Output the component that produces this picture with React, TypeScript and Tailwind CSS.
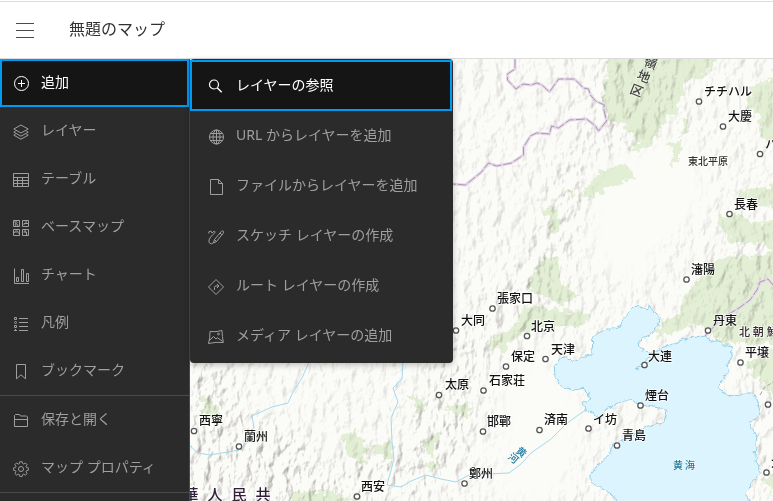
import type { ReactNode } from 'react';

type Item = { label: string; icon: ReactNode };

function Icon({ children }: { children: ReactNode }) {
  return (
    <svg
      className="mt-0.5 size-4 shrink-0"
      viewBox="0 0 16 16"
      fill="none"
      stroke="currentColor"
      strokeWidth="1"
      aria-hidden="true"
    >
      {children}
    </svg>
  );
}

const addIcon = (
  <Icon>
    <circle cx="8.5" cy="7.5" r="7" />
    <path d="M5 7.5h7M8.5 4v7" />
  </Icon>
);

const layersIcon = (
  <Icon>
    <path d="M8 1 15.2 5 8 9 .8 5zM2.6 7.2.8 8.2l7.2 4 7.2-4-1.8-1M2.6 10.2l-1.8 1 7.2 4 7.2-4-1.8-1" />
  </Icon>
);

const tableIcon = (
  <Icon>
    <path d="M.5 1.5h15v13H.5zM.5 5.5h15M.5 8.5h15M.5 11.5h15M4.5 5v9.5M9.5 5v9.5" />
  </Icon>
);

const basemapIcon = (
  <Icon>
    <path d="M.5.5h6v6h-6zM9.5.5h6v6h-6zM.5 9.5h6v6h-6zM9.5 9.5h6v6h-6z" />
    <path d="M2 1v2l2 1 1 2M3 1.5l1.5 1M2 4l1 2M13 1v2.5h-2V5M13 3.5h2M1 13l1.5-2h2l1 2.5M3 12v1M12 10v2h1.5v3M10.5 12H13" />
  </Icon>
);

const chartIcon = (
  <Icon>
    <path d="M1.5.5v15H16M3.5 9.5h2v4h-2zM8.5 1.5h2v12h-2zM13.5 5.5h2v8h-2z" />
  </Icon>
);

const legendIcon = (
  <Icon>
    <path d="M6 2.5h9M6 6.5h9M6 10.5h9M6 14.5h9M1.5 1.5h2v2h-2z" />
    <circle cx="2.5" cy="6.5" r="1" />
    <path d="M1.5 9.5h2v2h-2zM1 14.5h3M2.5 13v2" />
  </Icon>
);

const bookmarkIcon = (
  <Icon>
    <path d="M3.5.5h9v14.3L8 10.8l-4.5 4z" />
  </Icon>
);

const folderIcon = (
  <Icon>
    <path d="M1.5 13.5v-11l1-1h4l1 1.5h6l1 1v9.500zM1.5 6.5h13" />
  </Icon>
);

const gearIcon = (
  <Icon>
    <path
      d="M6.800.7h2.400l.5 2 1.200.5 1.800-1.100 1.700 1.700-1.100 1.800.5 1.200 2 .5v2.400l-2 .5-.5 1.200 1.100 1.800-1.700 1.700-1.800-1.100-1.200.5-.5 2H6.800l-.5-2-1.200-.5-1.800 1.100-1.700-1.700 1.100-1.800-.5-1.200-2-.5V7.300l2-.5.5-1.200-1.100-1.800 1.700-1.700 1.800 1.100 1.200-.5z"
      transform="translate(.4 0) scale(.95)"
    />
    <circle cx="8" cy="8" r="2.5" />
  </Icon>
);

const searchIcon = (
  <Icon>
    <circle cx="6" cy="5.5" r="4.500" strokeWidth="1.200" />
    <path d="m9.200 8.700 4.500 4.500" strokeWidth="1.400" />
  </Icon>
);

const globeIcon = (
  <Icon>
    <circle cx="8.5" cy="8" r="7" />
    <ellipse cx="8.5" cy="8" rx="3.5" ry="7" />
    <path d="M8.5 1v14M1.5 8h14M2.5 4.5h12M2.5 11.5h12" />
  </Icon>
);

const fileIcon = (
  <Icon>
    <path d="M2.5.5h8l4 4v11h-12zM10.5.5v4h4" />
  </Icon>
);

const sketchIcon = (
  <Icon>
    <path d="M5.5 14 6.5 10.5 13.5 2.200q1-.9 1.800 0t0 1.900L8.500 12.500zM12 4l2 1.800M6.500 10.500l2 2" />
    <path d="M.8 4.500Q.3 2.200 2.200 2.200T4 4q1.300-1.800 2.700-1.600T6 4.500Q1.500 8.500 1 11t1 3.500q1.500.8 3-.5" />
  </Icon>
);

const routeIcon = (
  <Icon>
    <path d="m8 .5 7.500 7.500L8 15.500.5 8zM6.500 11V8.500q0-1.500 1.500-1.500h3M9 5l2 2-2 2" />
  </Icon>
);

const mediaIcon = (
  <Icon>
    <path d="M2 2.500q6 .8 12-1 .2 6 1.300 12-7.200-.8-14.800 1Q2.200 9 2 2.500zM1.500 11.500 5.500 7.500 8 10l1.500-1.200 5 3.500" />
    <circle cx="10.500" cy="5" r=".9" />
  </Icon>
);

const mainItems: Item[] = [
  { label: '追加', icon: addIcon },
  { label: 'レイヤー', icon: layersIcon },
  { label: 'テーブル', icon: tableIcon },
  { label: 'ベースマップ', icon: basemapIcon },
  { label: 'チャート', icon: chartIcon },
  { label: '凡例', icon: legendIcon },
  { label: 'ブックマーク', icon: bookmarkIcon },
];

const fileItems: Item[] = [
  { label: '保存と開く', icon: folderIcon },
  { label: 'マップ プロパティ', icon: gearIcon },
];

const addItems: Item[] = [
  { label: 'レイヤーの参照', icon: searchIcon },
  { label: 'URL からレイヤーを追加', icon: globeIcon },
  { label: 'ファイルからレイヤーを追加', icon: fileIcon },
  { label: 'スケッチ レイヤーの作成', icon: sketchIcon },
  { label: 'ルート レイヤーの作成', icon: routeIcon },
  { label: 'メディア レイヤーの追加', icon: mediaIcon },
];

function NavButton({ item, active }: { item: Item; active?: boolean }) {
  return (
    <button
      type="button"
      aria-expanded={active}
      className={
        active
          ? 'flex h-12 w-full items-center gap-3 bg-[#151515] px-[13px] text-white outline-2 -outline-offset-2 outline-[#009af2]'
          : 'flex h-12 w-full items-center gap-3 px-[13px] text-[#9f9f9f]'
      }
    >
      {item.icon}
      <span className="pb-0.5">{item.label}</span>
    </button>
  );
}

function AddMenu() {
  return (
    <ul
      role="menu"
      className="absolute top-0 left-0 z-10 w-[263px] rounded-sm bg-[#2b2b2b] pt-px pr-px pb-0.5 shadow-[0_2px_6px_rgba(0,0,0,0.25)]"
    >
      {addItems.map((item, i) => (
        <li key={item.label} role="none">
          <button
            type="button"
            role="menuitem"
            className={
              i === 0
                ? 'flex h-[51px] w-full items-center gap-3 bg-[#151515] px-[18px] text-white outline-2 -outline-offset-2 outline-[#009af2]'
                : 'flex h-[50px] w-full items-center gap-3 px-[18px] text-[#9f9f9f]'
            }
          >
            {item.icon}
            <span className="pb-0.5">{item.label}</span>
          </button>
        </li>
      ))}
    </ul>
  );
}

type City = [name: string, x: number, y: number, cx: number, cy: number];

const cities: City[] = [
  ['チチハル', 704, 96, 699, 101.5],
  ['大慶', 728, 121, 723, 126.5],
  ['ハ', 765, 149, 760, 154],
  ['長春', 734, 209, 729.5, 214],
  ['瀋陽', 691, 274, 686.5, 279.5],
  ['張家口', 497, 303, 492.5, 308.5],
  ['大同', 461, 325, 456, 330.5],
  ['北京', 531, 331, 527, 336],
  ['天津', 551, 354, 545.5, 359],
  ['丹東', 713, 325, 708, 330.5],
  ['平壌', 745, 357, 740.5, 362.5],
  ['大連', 648, 361, 644.5, 365],
  ['保定', 511, 361, 506, 366.5],
  ['石家荘', 489, 385, 483.5, 390.5],
  ['太原', 445, 389, 439, 395],
  ['煙台', 645, 400, 640.5, 405.5],
  ['済南', 544, 424, 539.5, 430],
  ['イ坊', 593, 424, 588.5, 428.5],
  ['青島', 622, 440, 617, 445.5],
  ['邯鄲', 487, 426, 483, 431.5],
  ['鄭州', 469, 478, 464.5, 483.5],
  ['西寧', 199, 425, 194, 431],
  ['蘭州', 244, 441, 239, 446.5],
  ['西安', 361, 491, 357, 496.5],
  ['', 0, 0, 768, 404.5],
  ['大', 771, 467, 766.5, 472.5],
];

const seaPath =
  'M443 12 442 -5 455 -18 480 -28 525 -42 535 -65 570 -102 590 -98 610 -94 613 -104 618 -94 645 -65 640 -45 615 -15 590 -5 580 15 598 28 590 33 620 36 640 32 690 8 730-8 780-8 800 0 825 5 835 15 858 16 862 50 845 75 850 95 835 115 818 142 845 165 880 170 895 158 925 160 940 190 945 225 915 250 935 290 930 350 945 400 920 430 902 460 925 500 512 500 510 470 470 445 440 430 437 405 465 370 495 340 500 315 520 305 560 290 600 260 655 250 668 210 650 205 620 200 590 195 555 180 540 180 510 195 480 210 470 235 450 225 420 210 415 190 435 180 430 160 415 145 385 150 350 140 330 110 328 80 345 55 360 50 385 65 410 50 440 45z';

const northBorder =
  'm515 59v10l-7.500 5v6l8.500 9 7-5 8 1 6-2 5 2 7.500 7 9-13h16l9 9 5 1 2 6 5 6 9 4-1 3 3 13-8 10-3-5-9-7-17 1-11 8-7-2-2 8-13-1-6 3-7 11v8l-12 8-15 3-8-3-7 9-16 13-13-1';

const eastBorder = 'm773 285-5-6-8 3-3 8-7 10-11 8-17 10-17 18';

function TopoMap() {
  return (
    <svg
      className="block size-full"
      viewBox="190 59 583 442"
      preserveAspectRatio="xMinYMin slice"
      role="img"
      aria-label="地図"
    >
      <defs>
        <filter id="relief" x="0" y="0" width="100%" height="100%" colorInterpolationFilters="sRGB">
          <feTurbulence type="fractalNoise" baseFrequency="0.1 0.06" numOctaves="4" seed="8" />
          <feColorMatrix values="0 0 0 0 0  0 0 0 0 0  0 0 0 0 0  1 0 0 0 0" />
          <feDiffuseLighting surfaceScale="3" lightingColor="#fff" diffuseConstant="1.350">
            <feDistantLight azimuth="215" elevation="50" />
          </feDiffuseLighting>
          <feColorMatrix values=".92 0 0 0 .08  0 .96 0 0 .04  0 0 1 0 0  0 0 0 1 0" />
        </filter>
        <filter id="rough" x="-5%" y="-5%" width="110%" height="110%" colorInterpolationFilters="sRGB">
          <feTurbulence type="fractalNoise" baseFrequency="0.15" numOctaves="3" seed="4" />
          <feDisplacementMap in="SourceGraphic" scale="14" xChannelSelector="R" yChannelSelector="G" />
        </filter>
        <filter id="coast" x="-5%" y="-5%" width="110%" height="110%" colorInterpolationFilters="sRGB">
          <feTurbulence type="fractalNoise" baseFrequency="0.2" numOctaves="2" seed="2" />
          <feDisplacementMap in="SourceGraphic" scale="5" xChannelSelector="R" yChannelSelector="G" />
        </filter>
        <filter id="soft" x="-20%" y="-20%" width="140%" height="140%">
          <feGaussianBlur stdDeviation="9" />
        </filter>
        <mask id="mountains" maskUnits="userSpaceOnUse" x="190" y="59" width="583" height="442">
          <rect x="190" y="59" width="583" height="442" fill="#333" />
          <g filter="url(#soft)" fill="#5c5c5c">
            <path d="M610 40h60l5 70-45 40-60 100-30 80-90 60 15-70 60-60 30-90z" />
            <path d="M710 280 773 220V370l-30-20-35-20z" />
            <path d="M450 330 480 350 470 440 440 480 420 501H330L310 470 400 450z" fill="#777" />
            <path d="M190 360h30l30 60 60 20 10 70H190z" fill="#888" />
            <path d="M750 370h30v130h-18z" />
          </g>
          <path d="M590 165 690 130 710 200 670 240 630 290 590 250z" fill="#000" filter="url(#soft)" />
          <path d="M500 375 540 350 590 410 560 501H500z" fill="#000" filter="url(#soft)" />
        </mask>
      </defs>

      <rect x="190" y="59" width="583" height="442" fill="#fbfbf8" />

      <g fill="#e3efd5" filter="url(#rough)">
        <path d="M609 50H722L712 69 700 77 686 81 682 95 677 112 665 119 655 135 645 151 628 150 639 141 628 128 610 122 603 105 606 80z" />
        <path d="M755 82 790 76V142L762 140 758 115 745 104z" />
        <path d="M682 122l7-6-1 16-8 6zM667 144l14-3-1 18-12 9 6-14z" />
        <path d="M597 173 628 162 634 178 609 188 592 199 582 194zM566 191l8-2-2 10z" />
        <path d="M733 195 790 180V210L760 206zM716 219 735 212 755 224 790 216V254L755 242 733 245z" />
        <path d="M716 260 735 253 750 260 790 243V345L722 342 700 324 656 337 661 324 679 315 686 295z" />
        <path d="M542 209l15-2 4 16-10 13-3-18zM543 257l13-2 6 28 16 12-16 10-36-16z" />
        <path d="M486 344 512 328 528 305 552 309 590 314 582 326 555 326 524 332 503 351z" />
        <path d="M745 365 790 340V420L768 390zM762 480l28-15v45z" />
        <path d="M341 434l16-1 10 16-2 15-18-10zM371 445l22-2-2 18-16-6zM422 444l20-14-10 28zM294 490l44 3 20 10H288zM418 463l22 1-10 8zM443 407l29-5-5 16zM198 393l18 9 5 22-17-10zM410 394l16 9-6 12z" />
      </g>

      <rect
        x="190"
        y="59"
        width="583"
        height="442"
        filter="url(#relief)"
        mask="url(#mountains)"
        className="mix-blend-multiply"
      />

      <g fill="none" stroke="#a5d9ed" strokeWidth="1">
        <path d="m309 362-7 16-9 14-5 11-16 4-20 9 2 12-8 6-3 15-15 3-18 3-12-2-9-8" />
        <path d="m403 362-1 17-9 9 5 14-7 16 1 24 2 17-7 26 14 2 10-6 15-6 15 4 15 3 15-8 15 0 23-1 12-9 10-11 20-14 15-15 15-11 15-9 9-8 17-5" />
      </g>
      <g filter="url(#coast)">
        <path
          d={seaPath}
          transform="translate(445 340) scale(.33333)"
          fill="#dcf4fe"
          stroke="#93cde6"
          strokeWidth="3"
        />
        <path d="m635 369 9-7 4-4 3 1-4 6-8 3z" fill="#fafaf6" stroke="#93cde6" />
      </g>

      <g fill="none" stroke="#e5d9e8" strokeWidth="3" strokeLinejoin="round">
        <path d={northBorder} />
        <path d={eastBorder} />
      </g>
      <g fill="none" stroke="#b196b8" strokeWidth="1" strokeDasharray="9 2" strokeLinejoin="round">
        <path d={northBorder} />
        <path d={eastBorder} />
        <path d="m760 395 4-7 9-6" strokeDasharray="4 2" />
      </g>

      <g fill="#fff" stroke="#555" strokeWidth="1.300">
        {cities.map(([name, , , cx, cy]) => (
          <circle key={name} cx={cx} cy={cy} r="2.700" />
        ))}
      </g>
      <g
        className="font-medium"
        fontSize="12"
        fill="#111"
        stroke="#fff"
        strokeOpacity=".7"
        strokeWidth="2"
        strokeLinejoin="round"
        paintOrder="stroke"
      >
        {cities
          .filter(([name]) => name)
          .map(([name, x, y]) => (
            <text key={name} x={x} y={y}>
              {name}
            </text>
          ))}
        <text x="688" y="165" fontSize="10" fill="#33332a">
          東北平原
        </text>
        <text x="739" y="336" fontSize="11" fill="#352633">
          北 朝 鮮
        </text>
        <g fontSize="15" fill="#30203a" textAnchor="middle">
          <text x="191" y="500">華</text>
          <text x="215" y="500">人</text>
          <text x="239" y="500">民</text>
          <text x="263" y="500">共</text>
        </g>
        <g fontSize="13" fill="#444" strokeOpacity=".3" textAnchor="middle">
          <text transform="translate(649 67) rotate(22)">嶺</text>
          <text transform="translate(642 81) rotate(22)">地</text>
          <text transform="translate(635 95) rotate(22)">区</text>
        </g>
        <g fontSize="10" fill="#1f7a9c" strokeWidth="1" textAnchor="middle">
          <text transform="translate(519 455) rotate(40)">黄</text>
          <text transform="translate(511 461) rotate(40)">河</text>
          <text x="678" y="469">黄</text>
          <text x="690" y="469">海</text>
        </g>
      </g>
    </svg>
  );
}

export default function App() {
  return (
    <div className="flex h-screen flex-col overflow-hidden bg-white font-['Noto_Sans','Noto_Sans_CJK_JP',sans-serif] text-sm">
      <header className="mt-px flex h-[58px] shrink-0 items-center gap-[35px] border-y border-[#dcdcdc] px-4">
        <button type="button" aria-label="メニュー" className="flex w-[18px] flex-col gap-1.5 text-[#4a4a4a]">
          <span className="h-px w-full bg-current" />
          <span className="h-px w-full bg-current" />
          <span className="h-px w-full bg-current" />
        </button>
        <h1 className="pb-0.5 text-base text-[#323232]">無題のマップ</h1>
      </header>
      <div className="flex min-h-0 flex-1">
        <nav className="w-[190px] shrink-0 overflow-hidden border-r border-[#4a4a4a] bg-[#2b2b2b]">
          {mainItems.map((item, i) => (
            <NavButton key={item.label} item={item} active={i === 0} />
          ))}
          <div className="border-y border-[#4a4a4a]">
            {fileItems.map((item) => (
              <NavButton key={item.label} item={item} />
            ))}
          </div>
        </nav>
        <main className="relative min-w-0 flex-1">
          <TopoMap />
          <AddMenu />
        </main>
      </div>
    </div>
  );
}
